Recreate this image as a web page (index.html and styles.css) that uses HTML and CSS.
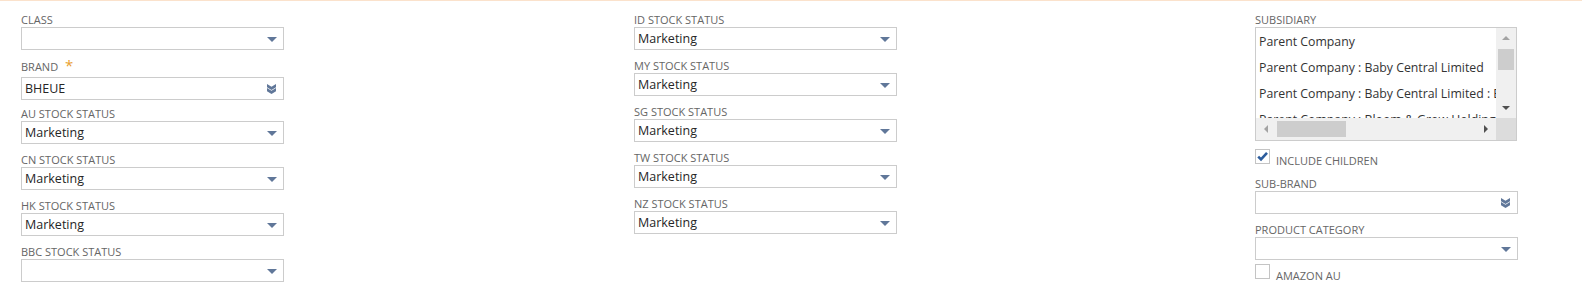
FILE: index.html
```html
<!DOCTYPE html>
<html lang="en">
<head>
<meta charset="UTF-8">
<meta name="viewport" content="width=device-width, initial-scale=1.0">
<title>Item Filters</title>
<link rel="stylesheet" href="styles.css">
</head>
<body>
<div class="filters">
   <!-- left column -->
   <div class="col">
      <div class="field">
         <div class="label">Class</div>
         <div class="select"><span class="value"></span><span class="caret"></span></div>
      </div>
      <div class="field field-req">
         <div class="label">Brand <span class="req">*</span></div>
         <div class="select"><span class="value">BHEUE</span>
            <svg class="chevrons" width="9" height="10" viewBox="0 0 9 10"><path d="M0 0 L4.5 2.8 L9 0 L9 3.2 L4.5 6 L0 3.2 Z M0 4 L4.5 6.8 L9 4 L9 7.2 L4.5 10 L0 7.2 Z" fill="#607799"/></svg>
         </div>
      </div>
      <div class="field">
         <div class="label">AU Stock Status</div>
         <div class="select"><span class="value">Marketing</span><span class="caret"></span></div>
      </div>
      <div class="field">
         <div class="label">CN Stock Status</div>
         <div class="select"><span class="value">Marketing</span><span class="caret"></span></div>
      </div>
      <div class="field">
         <div class="label">HK Stock Status</div>
         <div class="select"><span class="value">Marketing</span><span class="caret"></span></div>
      </div>
      <div class="field">
         <div class="label">BBC Stock Status</div>
         <div class="select"><span class="value"></span><span class="caret"></span></div>
      </div>
   </div>
   <!-- middle column -->
   <div class="col">
      <div class="field">
         <div class="label">ID Stock Status</div>
         <div class="select"><span class="value">Marketing</span><span class="caret"></span></div>
      </div>
      <div class="field">
         <div class="label">MY Stock Status</div>
         <div class="select"><span class="value">Marketing</span><span class="caret"></span></div>
      </div>
      <div class="field">
         <div class="label">SG Stock Status</div>
         <div class="select"><span class="value">Marketing</span><span class="caret"></span></div>
      </div>
      <div class="field">
         <div class="label">TW Stock Status</div>
         <div class="select"><span class="value">Marketing</span><span class="caret"></span></div>
      </div>
      <div class="field">
         <div class="label">NZ Stock Status</div>
         <div class="select"><span class="value">Marketing</span><span class="caret"></span></div>
      </div>
   </div>
   <!-- right column -->
   <div class="col">
      <div class="field field-list">
         <div class="label">Subsidiary</div>
         <div class="listbox">
            <div class="options">
               <div class="option">Parent Company</div>
               <div class="option">Parent Company : Baby Central Limited</div>
               <div class="option">Parent Company : Baby Central Limited : Baby Central Hong Kong</div>
               <div class="option">Parent Company : Bloom &amp; Grow Holdings</div>
            </div>
            <div class="vscroll">
               <div class="sb-btn"><span class="arr arr-up"></span></div>
               <div class="vthumb"></div>
               <div class="sb-fill"></div>
               <div class="sb-btn"><span class="arr arr-down"></span></div>
            </div>
            <div class="hscroll">
               <div class="sb-btn"><span class="arr arr-left"></span></div>
               <div class="hthumb"></div>
               <div class="sb-fill"></div>
               <div class="sb-btn"><span class="arr arr-right"></span></div>
            </div>
            <div class="corner"></div>
         </div>
      </div>
      <div class="check-row">
         <span class="checkbox">
            <svg width="13" height="13" viewBox="0 0 13 13"><path d="M2.2 6.6 L5 9.4 L11 2.8" fill="none" stroke="#2c5c9c" stroke-width="2.6"/></svg>
         </span>
         <span class="check-label">Include Children</span>
      </div>
      <div class="field">
         <div class="label">Sub-Brand</div>
         <div class="select"><span class="value"></span>
            <svg class="chevrons" width="9" height="10" viewBox="0 0 9 10"><path d="M0 0 L4.5 2.8 L9 0 L9 3.2 L4.5 6 L0 3.2 Z M0 4 L4.5 6.8 L9 4 L9 7.2 L4.5 10 L0 7.2 Z" fill="#607799"/></svg>
         </div>
      </div>
      <div class="field field-tight">
         <div class="label">Product Category</div>
         <div class="select"><span class="value"></span><span class="caret"></span></div>
      </div>
      <div class="check-row">
         <span class="checkbox"></span>
         <span class="check-label">Amazon AU</span>
      </div>
   </div>
</div>
</body>
</html>
```

FILE: styles.css
```css
 body {
    margin: 0;
    background-color: #fff;
    border-top: 1px solid #fbe2cc; /* thin peach line on top */
    font-family: "Open Sans", "Liberation Sans", sans-serif;
    overflow: hidden;
 }
 .filters {
    display: grid;
    grid-template-columns: 613px 621px 1fr;
    padding: 12px 0 0 21px;
 }
 .col {
    display: flex;
    flex-direction: column;
 }
 .field {
    width: 263px;
    margin-bottom: 9px;
 }
 .field-list {
    width: 262px;
    margin-bottom: 8px;
 }
 .field-tight {
    margin-bottom: 4px;
 }
 .label {
    font-size: 11px;
    line-height: 14px;
    height: 14px;
    color: #666;
    text-transform: uppercase;
    white-space: nowrap;
 }
 /* required field: taller label row for the star */
 .field-req {
    margin-bottom: 7px;
 }
 .field-req .label {
    height: 18px;
    line-height: 16px;
 }
 .req {
    color: #e9a02f;
    font-size: 15px;
    line-height: 0;
    vertical-align: 0;
    margin-left: 4px;
 }
 /* dropdown box */
 .select {
    box-sizing: border-box;
    height: 23px;
    border: 1px solid #ccc;
    display: flex;
    align-items: center;
    justify-content: space-between;
    padding: 0 6px 0 3px;
    font-size: 12.5px;
    color: #262626;
 }
 .caret {
    width: 0;
    height: 0;
    border-left: 5px solid transparent;
    border-right: 5px solid transparent;
    border-top: 5px solid #607799;
    margin-top: 2px;
 }
 .chevrons {
    margin-right: 1px;
 }
 /* subsidiary list */
 .listbox {
    box-sizing: border-box;
    height: 114px;
    border: 1px solid #ccc;
    display: grid;
    grid-template-columns: 1fr 20px;
    grid-template-rows: 90px 22px;
 }
 .options {
    overflow: hidden;
    padding: 1px 0 0 3px;
 }
 .option {
    font-size: 12.3px;
    line-height: 26px;
    color: #333;
    white-space: nowrap;
 }
 .vscroll {
    background-color: #f0f0f0;
    display: flex;
    flex-direction: column;
 }
 .hscroll {
    background-color: #f0f0f0;
    display: flex;
 }
 .sb-btn {
    flex: 0 0 20px;
    display: flex;
    align-items: center;
    justify-content: center;
 }
 .sb-fill {
    flex: 1;
 }
 .vthumb {
    height: 21px;
    margin: 1px 2px 0;
    background-color: #cdcdcd;
 }
 .hthumb {
    width: 69px;
    margin: 3px 0 3px 1px;
    background-color: #cdcdcd;
 }
 .corner {
    background-color: #dcdcdc;
 }
 .arr {
    width: 0;
    height: 0;
 }
 .arr-up {
    border-left: 4px solid transparent;
    border-right: 4px solid transparent;
    border-bottom: 4px solid #a3a3a3;
 }
 .arr-down {
    border-left: 4px solid transparent;
    border-right: 4px solid transparent;
    border-top: 4px solid #505050;
 }
 .arr-left {
    border-top: 4px solid transparent;
    border-bottom: 4px solid transparent;
    border-right: 4px solid #a3a3a3;
 }
 .arr-right {
    border-top: 4px solid transparent;
    border-bottom: 4px solid transparent;
    border-left: 4px solid #505050;
 }
 /* checkboxes */
 .check-row {
    display: flex;
    align-items: flex-start;
    height: 19px;
    margin-bottom: 9px;
 }
 .checkbox {
    box-sizing: border-box;
    width: 15px;
    height: 15px;
    border: 1px solid #c4c4c4;
    background-color: #fff;
    display: flex;
    align-items: center;
    justify-content: center;
 }
 .check-label {
    font-size: 11px;
    line-height: 14px;
    margin: 5px 0 0 6px;
    color: #666;
    text-transform: uppercase;
 }
```
